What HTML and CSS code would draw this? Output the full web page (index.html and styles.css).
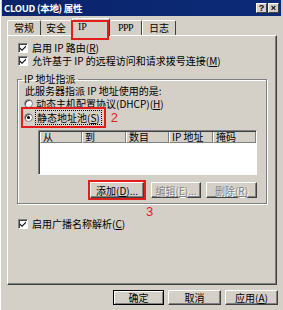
FILE: index.html
```html
<!DOCTYPE html>
<html>
<head>
<meta charset="utf-8">
<link rel="stylesheet" href="styles.css">
</head>
<body>
<div class="win">
  <div class="titlebar">
    <span class="title">CLOUD (本地) 属性</span>
    <span class="tbtns"><span class="tbtn">?</span><span class="tbtn">×</span></span>
  </div>
  <div class="tabs">
    <div class="tab t1">常规</div>
    <div class="tab t2">安全</div>
    <div class="tab t3 sel">IP</div>
    <div class="tab t4">PPP</div>
    <div class="tab t5">日志</div>
  </div>
  <div class="panel">
    <div class="row"><span class="cb"><svg width="8" height="8" viewBox="0 0 8 8"><path d="M1 3.5 L3 5.5 L7 1.5 L7 3 L3 7 L1 5 Z" fill="#000"/></svg></span><span>启用 IP 路由(<u>R</u>)</span></div>
    <div class="row"><span class="cb"><svg width="8" height="8" viewBox="0 0 8 8"><path d="M1 3.5 L3 5.5 L7 1.5 L7 3 L3 7 L1 5 Z" fill="#000"/></svg></span><span>允许基于 IP 的远程访问和请求拨号连接(<u>M</u>)</span></div>
    <fieldset class="group">
      <legend>IP 地址指派</legend>
      <div class="gtext">此服务器指派 IP 地址使用的是:</div>
      <div class="row r1"><span class="rb"></span><span>动态主机配置协议(DHCP)(<u>H</u>)</span></div>
      <div class="row r2"><span class="hl"><span class="rb on"></span><span class="focus">静态地址池(<u>S</u>)</span></span><span class="mark">2</span></div>
      <div class="list">
        <div class="lhead">
          <span class="col c1">从</span>
          <span class="col c2">到</span>
          <span class="col c3">数目</span>
          <span class="col c4">IP 地址</span>
          <span class="col c5">掩码</span>
        </div>
      </div>
      <div class="btnrow">
        <span class="btn add">添加(<u>D</u>)...<span class="mark3">3</span></span>
        <span class="btn edit dis">编辑(<u>E</u>)...</span>
        <span class="btn del dis">删除(<u>R</u>)</span>
      </div>
    </fieldset>
    <div class="row r3"><span class="cb"><svg width="8" height="8" viewBox="0 0 8 8"><path d="M1 3.5 L3 5.5 L7 1.5 L7 3 L3 7 L1 5 Z" fill="#000"/></svg></span><span>启用广播名称解析(<u>C</u>)</span></div>
  </div>
  <div class="footer">
    <span class="btn ok">确定</span>
    <span class="btn cancel">取消</span>
    <span class="btn apply">应用(<u>A</u>)</span>
  </div>
</div>
</body>
</html>
```
FILE: styles.css
```css
* { box-sizing: border-box; }
html, body { margin: 0; padding: 0; }
body {
  width: 283px;
  height: 310px;
  overflow: hidden;
  background: #d4d0c8;
  font-family: "Noto Sans CJK SC", "Liberation Sans", sans-serif;
  font-size: 10px;
  color: #000;
}
u { text-decoration: underline; }
.win {
  height: 310px;
  padding: 0 2px;
  border-left: 1px solid #fff;
}
.titlebar {
  height: 16px;
  background: linear-gradient(to right, #0a246a, #0c2a78);
  display: flex;
  align-items: center;
  justify-content: space-between;
  padding: 0 2px 0 2px;
  margin-left: -1px;
}
.title {
  color: #fff;
  font-weight: bold;
  font-size: 9.5px;
  line-height: 12px;
  letter-spacing: -0.3px;
}
.tbtns { display: flex; gap: 1px; }
.tbtn {
  width: 11px;
  height: 10px;
  background: #d4d0c8;
  border: 1px solid;
  border-color: #fff #404040 #404040 #fff;
  font-family: "Liberation Sans", sans-serif;
  font-weight: bold;
  font-size: 9px;
  line-height: 8px;
  text-align: center;
}
.tabs {
  display: flex;
  align-items: flex-end;
  margin-top: 1px;
  margin-left: 4px;
  height: 18px;
}
.tab {
  height: 15px;
  border-top: 1px solid #fff;
  border-left: 1px solid #fff;
  border-right: 1px solid #404040;
  border-radius: 2px 2px 0 0;
  text-align: center;
  line-height: 13px;
}
.t1 { width: 34px; }
.t2 { width: 31px; }
.t3 { width: 38px; }
.t4 { width: 32px; }
.t5 { width: 34px; }
.t4, .t2 { border-left: none; }
.tab.sel {
  height: 18px;
  margin-bottom: -1px;
  background: #d4d0c8;
  position: relative;
  z-index: 2;
  text-align: left;
  padding-left: 5px;
  font-family: "Liberation Serif", serif;
  font-size: 10px;
  line-height: 15px;
}
.tab.sel::after {
  content: "";
  position: absolute;
  left: -2px;
  right: 0;
  top: 1px;
  bottom: -4px;
  border: 2px solid #e31c1c;
}
.t4 { font-family: "Liberation Serif", serif; letter-spacing: -0.5px; }
.panel {
  position: relative;
  z-index: 1;
  width: 270px;
  height: 250px;
  margin-left: 4px;
  border: 1px solid;
  border-color: #fff #404040 #404040 #fff;
  box-shadow: inset -1px -1px #808080;
  padding: 5px 0 0 10px;
}
.row {
  display: flex;
  align-items: center;
  height: 13px;
  line-height: 13px;
  white-space: nowrap;
}
.cb {
  width: 10px;
  height: 10px;
  background: #fff;
  border: 1px solid;
  border-color: #808080 #fff #fff #808080;
  box-shadow: inset 1px 1px #404040;
  margin-right: 4px;
  display: flex;
  align-items: center;
  justify-content: center;
  flex: none;
}
.group {
  margin: 6px 0 0 -1px;
  width: 250px;
  padding: 0 0 5px 6px;
  border: 1px solid #808080;
  box-shadow: 1px 1px 0 #fff, inset 1px 1px 0 #fff;
}
.group legend {
  padding: 0 2px;
  margin-left: -2px;
  line-height: 12px;
  font-size: 10px;
}
.gtext { line-height: 10px; height: 10px; margin-top: 1px; padding-left: 1px; white-space: nowrap; }
.r1 { margin-top: 1px; height: 12px; }
.r2 { margin-top: 2px; height: 12px; }
.rb {
  width: 9px;
  height: 9px;
  border-radius: 50%;
  background: #fff;
  border: 1px solid #808080;
  box-shadow: inset 1px 1px #404040;
  margin-right: 3px;
  flex: none;
  display: flex;
  align-items: center;
  justify-content: center;
}
.rb.on::before {
  content: "";
  width: 3px;
  height: 3px;
  border-radius: 50%;
  background: #000;
}
.hl {
  display: inline-flex;
  align-items: center;
  outline: 2px solid #e31c1c;
  padding: 2px 3px 2px 1px;
  margin-left: -1px;
}
.focus { outline: 1px dotted #000; outline-offset: 0; padding: 0 1px; }
.mark {
  color: #e31c1c;
  font-family: "Liberation Sans", sans-serif;
  font-size: 13px;
  margin-left: 7px;
}
.list {
  margin: 7px 0 0 14px;
  width: 219px;
  height: 45px;
  background: #fff;
  border: 1px solid;
  border-color: #808080 #fff #fff #808080;
  box-shadow: inset 1px 1px #404040;
  padding: 1px 0 0 1px;
}
.lhead { display: flex; height: 11px; }
.col {
  height: 11px;
  line-height: 10px;
  background: #d4d0c8;
  border-left: 1px solid #fff;
  border-right: 1px solid #808080;
  border-bottom: 1px solid #808080;
  padding-left: 2px;
  white-space: nowrap;
}
.c1 { width: 42px; }
.c2 { width: 44px; }
.c3 { width: 43px; }
.c4 { width: 44px; }
.c5 { flex: 1; }
.btnrow {
  display: flex;
  justify-content: flex-end;
  gap: 5px;
  margin-top: 7px;
  width: 233px;
}
.btn {
  display: inline-flex;
  align-items: center;
  justify-content: center;
  height: 16px;
  background: #d4d0c8;
  border: 1px solid;
  border-color: #fff #404040 #404040 #fff;
  box-shadow: inset -1px -1px #808080;
  white-space: nowrap;
  position: relative;
}
.add { width: 54px; outline: 2px solid #e31c1c; outline-offset: 0; margin-right: 2px; }
.edit { width: 50px; }
.del { width: 51px; }
.dis { color: #808080; text-shadow: 1px 1px 0 #fff; }
.mark3 {
  position: absolute;
  left: 55px;
  top: 22px;
  color: #e31c1c;
  font-family: "Liberation Sans", sans-serif;
  font-size: 13px;
  line-height: 13px;
}
.r3 { margin-top: 13px; }
.footer {
  display: flex;
  justify-content: flex-end;
  gap: 4px;
  width: 275px;
  margin-top: 5px;
}
.footer .btn { height: 15px; }
.ok { width: 51px; border-color: #000; box-shadow: inset 1px 1px #fff, inset -1px -1px #808080; }
.cancel { width: 53px; }
.apply { width: 53px; }
```
